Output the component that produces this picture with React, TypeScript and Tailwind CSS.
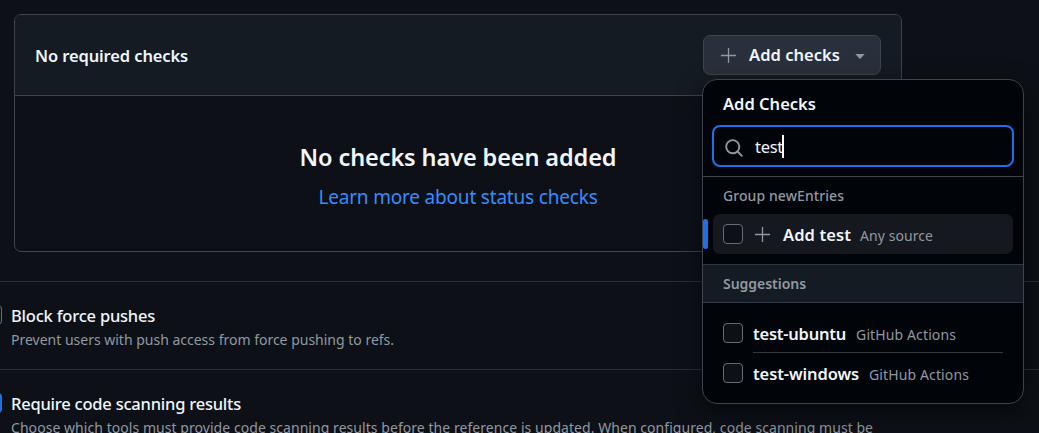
import type { ReactNode } from "react";

function Plus({ className }: { className: string }) {
  return (
    <svg viewBox="0 0 16 16" className={className} fill="currentColor">
      <path d="M7.4.9h1.2v6.5h6.5v1.2H8.6v6.5H7.4V8.6H.9V7.4h6.5z" />
    </svg>
  );
}

function SearchIcon() {
  return (
    <svg viewBox="0 0 16 16" className="mt-[3px] h-5 w-5 shrink-0 text-[#9198a1]" fill="currentColor">
      <path d="M10.68 11.74a6 6 0 0 1-7.922-8.982 6 6 0 0 1 8.982 7.922l3.04 3.04a.749.749 0 0 1-.326 1.275.749.749 0 0 1-.734-.215ZM11.5 7a4.499 4.499 0 1 0-8.997 0A4.499 4.499 0 0 0 11.5 7Z" />
    </svg>
  );
}

function Checkbox() {
  return <span className="h-5 w-5 shrink-0 rounded-[4px] border border-[#656c76] bg-[#0d1117]" />;
}

function Suggestion({ name, source }: { name: ReactNode; source: string }) {
  return (
    <div className="flex h-10 pl-5">
      <Checkbox />
      <div className="ml-[10px] flex h-[21px] items-baseline leading-[21px]">
        {name}
        <span className="ml-[10px] text-[14px] tracking-[0.12px] text-[#9198a1]">{source}</span>
      </div>
    </div>
  );
}

function ChecksMenu() {
  return (
    <div className="absolute top-[44px] -left-px z-10 h-[325px] w-[322px] overflow-hidden rounded-[15px] border border-[#3d444d] bg-[#010409] shadow-[0_8px_24px_rgba(1,4,9,0.65)]">
      <div className="h-[97px] border-b border-[#3d444d] px-[9px] pt-3">
        <div className="pl-[11px] text-[16.5px] leading-[23px] font-semibold tracking-[0.01px]">Add Checks</div>
        <div className="mt-[10px] flex h-[42px] w-[302px] items-center rounded-[8px] border-2 border-[#1f6feb] pl-[10px]">
          <SearchIcon />
          <span className="mt-[3px] ml-[11px] text-[16.5px] tracking-[-0.28px]">test</span>
          <span className="-ml-px h-[23px] w-[2px] bg-white" />
        </div>
      </div>
      <div className="h-[87px] pt-2">
        <div className="pl-5 text-[14px] leading-[22px] font-medium tracking-[0.08px] text-[#9198a1]">
          Group newEntries
        </div>
        <div className="mt-[7px] flex h-10 items-center">
          <span className="h-[30px] w-[5px] rounded-[3px] bg-[#1f6feb]" />
          <div className="ml-[5px] flex h-10 w-[300px] items-center rounded-[7px] bg-[#15191f] pl-[10px]">
            <Checkbox />
            <Plus className="ml-[11px] h-[17px] w-[17px] text-[#9198a1]" />
            <div className="mt-[2px] ml-[12px] flex items-baseline leading-[23px]">
              <span className="text-[16.5px] font-semibold tracking-[0.1px]">Add test</span>
              <span className="ml-[9px] text-[14px] tracking-[0.07px] text-[#9198a1]">Any source</span>
            </div>
          </div>
        </div>
      </div>
      <div className="flex h-[39px] items-center border-y border-[#2f3742] bg-[#151b23] pl-5 text-[14px] font-semibold tracking-[-0.03px] text-[#9198a1]">
        Suggestions
      </div>
      <div className="pt-5">
        <Suggestion
          name={<span className="text-[16.5px] font-semibold tracking-[-0.23px]">test-ubuntu</span>}
          source="GitHub Actions"
        />
        <div className="-mt-[11px] mb-[10px] ml-[50px] h-px w-[250px] bg-[#34383e]" />
        <Suggestion
          name={<span className="text-[16.5px] font-semibold tracking-[-0.11px]">test-windows</span>}
          source="GitHub Actions"
        />
      </div>
    </div>
  );
}

export default function App() {
  return (
    <main className="h-[433px] w-[1039px] overflow-hidden bg-[#0d1117] pt-[14px] font-['Noto_Sans',sans-serif] whitespace-nowrap text-[#f0f6fc]">
      <section className="ml-[14px] h-[238px] w-[888px] rounded-[7px] border border-[#3d444d]">
        <header className="flex h-[81px] items-center justify-between rounded-t-[6px] border-b border-[#3d444d] bg-[#151b23] px-5">
          <h2 className="pt-[2px] text-[16.5px] font-semibold tracking-[-0.12px]">No required checks</h2>
          <div className="relative">
            <button className="flex h-10 w-[178px] items-center rounded-[7px] border border-[#3d444d] bg-[#2a303b] pl-[16px] text-[16.5px] font-semibold">
              <Plus className="h-[17px] w-[17px] text-[#9198a1]" />
              <span className="mt-px ml-[12px] tracking-[0.04px]">Add checks</span>
              <svg viewBox="0 0 10 5" className="mt-[2px] ml-[15px] h-[5px] w-[10px] text-[#9198a1]" fill="currentColor">
                <path d="M.3 0h9.4L5.3 4.8a.45.45 0 0 1-.6 0z" />
              </svg>
            </button>
            <ChecksMenu />
          </div>
        </header>
        <div className="flex flex-col items-center pt-[43px]">
          <h3 className="text-[23.5px] leading-[36px] font-semibold tracking-[-0.1px]">No checks have been added</h3>
          <a className="mt-[7px] text-[19px] leading-[30px] tracking-[-0.19px] text-[#388bfd]">
            Learn more about status checks
          </a>
        </div>
      </section>
      <div className="mt-[29px] flex h-[88px] border-t border-[#2a3038] pt-[23px]">
        <span className="-ml-[18px] h-5 w-5 rounded-[4px] border border-[#656c76]" />
        <div className="ml-[9px]">
          <div className="text-[16.5px] leading-[22px] font-medium tracking-[-0.21px]">Block force pushes</div>
          <div className="mt-[2px] text-[14px] leading-[22px] tracking-[-0.005px] text-[#9198a1]">
            Prevent users with push access from force pushing to refs.
          </div>
        </div>
      </div>
      <div className="flex h-[88px] border-t border-[#2a3038] pt-[23px]">
        <span className="-ml-[18px] h-5 w-5 rounded-[4px] bg-[#1f6feb]" />
        <div className="ml-[9px]">
          <div className="text-[16.5px] leading-[22px] font-medium tracking-[-0.22px]">Require code scanning results</div>
          <div className="mt-[2px] text-[14px] leading-[22px] tracking-[0.053px] text-[#9198a1]">
            Choose which tools must provide code scanning results before the reference is updated. When configured, code
            scanning must be
          </div>
        </div>
      </div>
    </main>
  );
}
